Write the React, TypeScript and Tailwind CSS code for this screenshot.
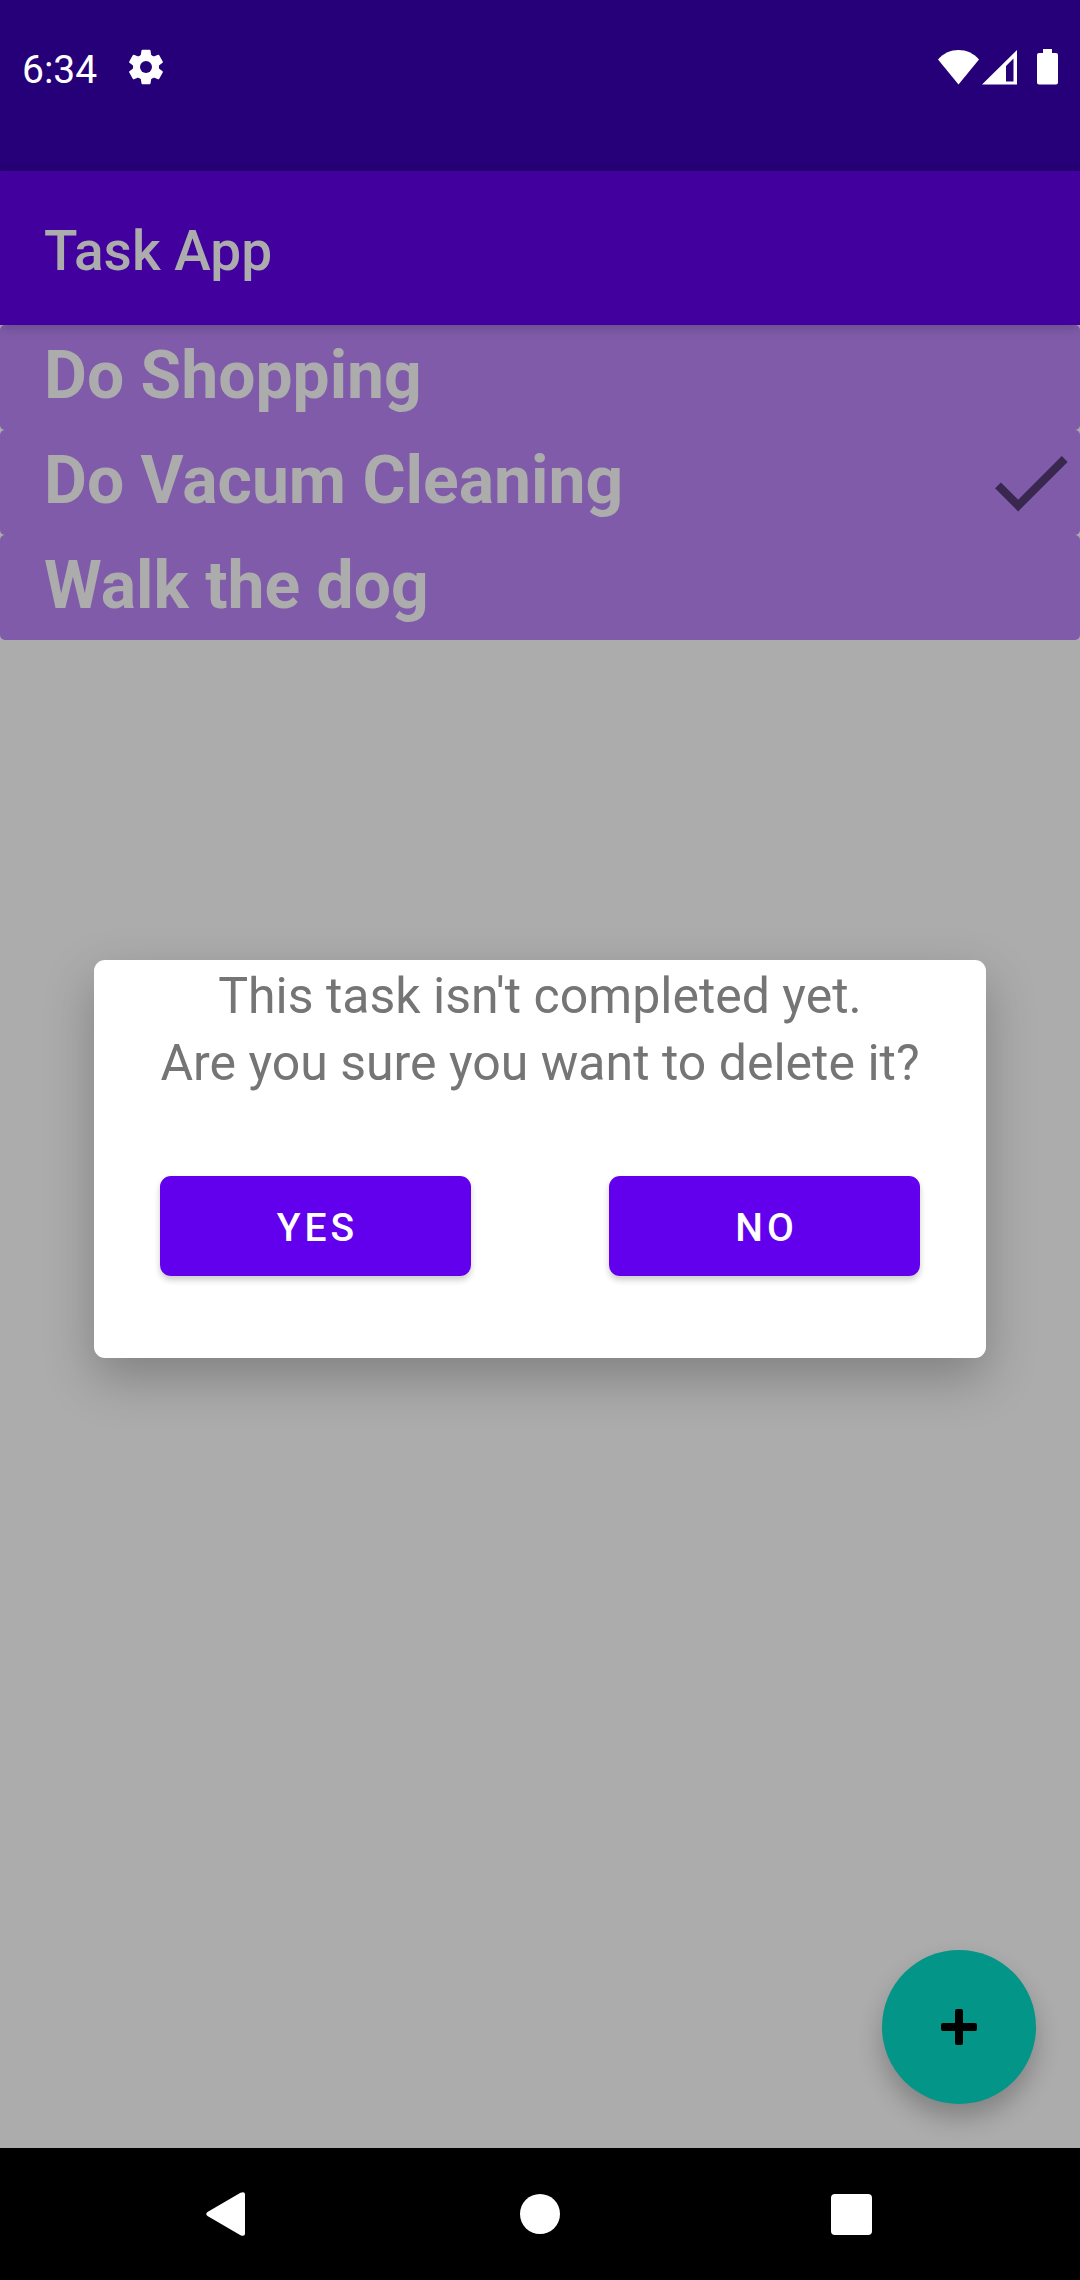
type Task = { title: string; done: boolean };

const tasks: Task[] = [
  { title: "Do Shopping", done: false },
  { title: "Do Vacum Cleaning", done: true },
  { title: "Walk the dog", done: false },
];

const gearTeeth = [0, 60, 120, 180, 240, 300];

function GearIcon() {
  return (
    <svg viewBox="-21 -21 42 42" className="size-[42px] fill-current" aria-hidden="true">
      {gearTeeth.map((angle) => (
        <path
          key={angle}
          d="M-3.500 -17.300H3.500Q4.400 -17.300 4.500 -16.500L5.200 -12L7 -9H-7L-5.200 -12L-4.500 -16.500Q-4.400 -17.300 -3.500 -17.300Z"
          transform={`rotate(${angle})`}
        />
      ))}
      <circle r="13" />
      <circle r="6" className="fill-[#260078]" />
    </svg>
  );
}

function StatusBar() {
  return (
    <div className="flex h-[171px] items-start justify-between bg-[#260078] px-[22px] pt-[45px] text-white">
      <div className="flex h-[44px] items-center gap-[28px]">
        <time className="pt-[6px] text-[39px] leading-[44px]">6:34</time>
        <GearIcon />
      </div>
      <div className="flex h-[44px] items-center">
        <svg viewBox="0 0 41 36" className="mr-[3px] h-[36px] w-[41px] fill-current" aria-hidden="true">
          <path d="M20.500 35.500 0 10.500C5.500 4 13 1 20.500 1S35.500 4 41 10.500Z" />
        </svg>
        <svg viewBox="0 0 35 36" className="mr-[20px] h-[36px] w-[35px] fill-current" aria-hidden="true">
          <path fillRule="evenodd" d="M0 35.500 35 1V35.500ZM24 17 31.500 9.500V32.500H24Z" />
        </svg>
        <svg viewBox="0 0 21 36" className="h-[36px] w-[21px] fill-current" aria-hidden="true">
          <path d="M6 0H15V4H19Q21 4 21 6V33.500Q21 35.500 19 35.500H2Q0 35.500 0 33.500V6Q0 4 2 4H6Z" />
        </svg>
      </div>
    </div>
  );
}

function TaskRow({ title, done }: Task) {
  return (
    <li className="flex h-[105px] items-center justify-between rounded-[5px] bg-[#7f5ba9] pl-[44px]">
      <span className="pb-[4px] text-[66px] leading-[80px] font-bold text-[#acacac]">{title}</span>
      {done && (
        <svg viewBox="0 0 24 24" className="size-[99px] fill-[#3a274f]" role="img" aria-label="Completed">
          <path d="M9 16.170 4.830 12l-1.420 1.410L9 19 21 7l-1.410-1.410z" />
        </svg>
      )}
    </li>
  );
}

function ConfirmDialog() {
  const button =
    "h-[100px] w-[311px] rounded-[11px] bg-[#6200ee] pt-[4px] pl-[4px] text-[39px] leading-[44px] font-medium tracking-[4px] text-white shadow-[0_4px_6px_rgba(0,0,0,0.2)]";
  return (
    <div className="absolute inset-0 z-20 flex items-center justify-center px-[94px] pb-px">
      <div
        role="dialog"
        aria-modal="true"
        aria-labelledby="confirm-message"
        className="w-full max-w-[892px] rounded-[11px] bg-white px-[66px] pt-[3px] pb-[82px] shadow-[0_20px_50px_rgba(0,0,0,0.25)]"
      >
        <p id="confirm-message" className="text-center text-[50px] leading-[67px] whitespace-nowrap text-[#757575]">
          This task isn't completed yet.
          <br />
          Are you sure you want to delete it?
        </p>
        <div className="mt-[79px] flex justify-between">
          <button type="button" className={button}>YES</button>
          <button type="button" className={button}>NO</button>
        </div>
      </div>
    </div>
  );
}

function NavigationBar() {
  const button = "flex h-[132px] w-[164px] items-center justify-center";
  return (
    <nav className="flex justify-evenly bg-black" aria-label="System navigation">
      <button type="button" aria-label="Back" className={button}>
        <svg viewBox="0 0 46 46" className="size-[46px] fill-white" aria-hidden="true">
          <path d="M1.500 21 34.500 1.700Q39 0 39 3.500V42.500Q39 46 34.500 44.300L1.500 25Q-1 23 1.500 21Z" />
        </svg>
      </button>
      <button type="button" aria-label="Home" className={button}>
        <span className="size-[40px] rounded-full bg-white" />
      </button>
      <button type="button" aria-label="Recent apps" className={button}>
        <span className="size-[41px] rounded-[4px] bg-white" />
      </button>
    </nav>
  );
}

export default function App() {
  return (
    <div className="flex min-h-screen flex-col bg-[#acacac] font-['Roboto',sans-serif]">
      <StatusBar />
      <div className="relative flex flex-1 flex-col">
        <header className="relative z-10 flex h-[154px] items-center bg-[#42009e] px-[44px] pt-[6px] shadow-[0_2px_12px_rgba(0,0,0,0.2)]">
          <h1 className="text-[55px] leading-[64px] font-medium text-[#acacac]">Task App</h1>
        </header>
        <main className="flex-1">
          <ul>
            {tasks.map((task) => (
              <TaskRow key={task.title} {...task} />
            ))}
          </ul>
        </main>
        <button
          type="button"
          aria-label="Add task"
          className="absolute right-[44px] bottom-[44px] flex size-[154px] items-center justify-center rounded-full bg-[#039588] shadow-[0_14px_24px_rgba(0,0,0,0.24)]"
        >
          <svg viewBox="0 0 36 36" className="size-[36px]" aria-hidden="true">
            <rect x="14" width="8" height="36" rx="2" />
            <rect y="14" width="36" height="8" rx="2" />
          </svg>
        </button>
        <ConfirmDialog />
      </div>
      <NavigationBar />
    </div>
  );
}
